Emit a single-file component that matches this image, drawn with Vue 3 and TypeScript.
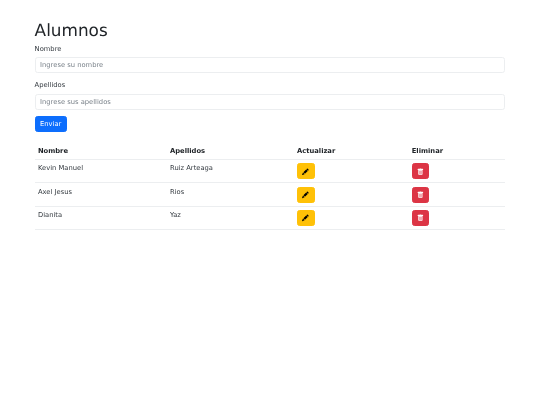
<script setup lang="ts">
interface Alumno { nombre: string; apellidos: string }
const alumnos: Alumno[] = [
  { nombre: 'Kevin Manuel', apellidos: 'Ruiz Arteaga' },
  { nombre: 'Axel Jesus', apellidos: 'Rios' },
  { nombre: 'Dianita', apellidos: 'Yaz' },
]
</script>

<template>
  <div class="page">
    <main class="container">
      <h1 class="title">Alumnos</h1>
      <form class="form" @submit.prevent>
        <div class="field">
          <label class="label" for="nombre">Nombre</label>
          <input id="nombre" class="input" type="text" placeholder="Ingrese su nombre" />
        </div>
        <div class="field">
          <label class="label" for="apellidos">Apellidos</label>
          <input id="apellidos" class="input" type="text" placeholder="Ingrese sus apellidos" />
        </div>
        <button class="btn btn-primary" type="submit">Enviar</button>
      </form>
      <table class="table">
        <colgroup>
          <col class="c1" /><col class="c2" /><col class="c3" /><col />
        </colgroup>
        <thead>
          <tr>
            <th>Nombre</th>
            <th>Apellidos</th>
            <th>Actualizar</th>
            <th>Eliminar</th>
          </tr>
        </thead>
        <tbody>
          <tr v-for="a in alumnos" :key="a.nombre">
            <td>{{ a.nombre }}</td>
            <td>{{ a.apellidos }}</td>
            <td>
              <button class="btn btn-warning" type="button" aria-label="Actualizar">
                <svg class="icon" viewBox="0 0 16 16" fill="currentColor">
                  <path d="M12.854.146a.5.5 0 0 0-.707 0L10.5 1.793 14.207 5.5l1.647-1.646a.5.5 0 0 0 0-.708l-3-3zm.646 6.061L9.793 2.5 3.293 9H3.5a.5.5 0 0 1 .5.5v.5h.5a.5.5 0 0 1 .5.5v.5h.5a.5.5 0 0 1 .5.5v.5h.5a.5.5 0 0 1 .5.5v.207l6.5-6.5zm-7.468 7.468A.5.5 0 0 1 6 13.5V13h-.5a.5.5 0 0 1-.5-.5V12h-.5a.5.5 0 0 1-.5-.5V11h-.5a.5.5 0 0 1-.5-.5V10h-.5a.499.499 0 0 1-.175-.032l-.179.178a.5.5 0 0 0-.11.168l-2 5a.5.5 0 0 0 .65.65l5-2a.5.5 0 0 0 .168-.11l.178-.178z" />
                </svg>
              </button>
            </td>
            <td>
              <button class="btn btn-danger" type="button" aria-label="Eliminar">
                <svg class="icon" viewBox="0 0 16 16" fill="currentColor">
                  <path d="M2.5 1a1 1 0 0 0-1 1v1a1 1 0 0 0 1 1H3v9a2 2 0 0 0 2 2h6a2 2 0 0 0 2-2V4h.5a1 1 0 0 0 1-1V2a1 1 0 0 0-1-1H10a1 1 0 0 0-1-1H7a1 1 0 0 0-1 1H2.5zm3 4a.5.5 0 0 1 .5.5v7a.5.5 0 0 1-1 0v-7a.5.5 0 0 1 .5-.5zM8 5a.5.5 0 0 1 .5.5v7a.5.5 0 0 1-1 0v-7A.5.5 0 0 1 8 5zm3 .5v7a.5.5 0 0 1-1 0v-7a.5.5 0 0 1 1 0z" />
                </svg>
              </button>
            </td>
          </tr>
        </tbody>
      </table>
    </main>
  </div>
</template>

<style scoped>
.page {
  zoom: 0.421875;
  width: 1280px;
  min-height: 960px;
  color: #343a40;
  font-family: "DejaVu Sans", sans-serif;
  font-size: 16px;
  line-height: 1.5;
  text-rendering: geometricPrecision;
  will-change: transform;
}
.container {
  box-sizing: border-box;
  width: 1140px;
  margin: 0 auto;
  padding: 48px 12px 0;
}
.title {
  margin: 0 0 8px;
  color: #212529;
  font-size: 40px;
  font-weight: 500;
  line-height: 1.2;
}
.form {
  display: flex;
  flex-direction: column;
  align-items: flex-start;
  margin-bottom: 23px;
}
.field {
  align-self: stretch;
  margin-bottom: 16px;
}
.label {
  display: block;
  margin-bottom: 8px;
}
.input {
  display: block;
  box-sizing: border-box;
  width: 100%;
  height: 38px;
  padding: 6px 10.6px;
  border: 1px solid #eceef0;
  border-radius: 6px;
  background: #fff;
  color: #212529;
  font: inherit;
  outline: none;
}
.input::placeholder {
  color: #7a828a;
  opacity: 1;
}
.btn {
  display: inline-flex;
  align-items: center;
  justify-content: center;
  box-sizing: border-box;
  height: 38px;
  padding: 6px 10.6px;
  border: 1px solid transparent;
  border-radius: 6px;
  font: inherit;
}
.btn-primary {
  background: #0d6efd;
  border-color: #0d6efd;
  color: #fff;
}
.btn-warning {
  width: 42px;
  background: #ffc107;
  border-color: #ffc107;
  color: #000;
}
.btn-danger {
  width: 42px;
  background: #dc3545;
  border-color: #dc3545;
  color: #fff;
}
.icon {
  display: block;
  width: 18px;
  height: 18px;
}
.table {
  width: 100%;
  border-collapse: collapse;
  table-layout: fixed;
}
.c1 { width: 313px; }
.c2 { width: 301px; }
.c3 { width: 272px; }
th, td {
  padding: 8px 8px 6.8px;
  border-bottom: 1px solid #eceef0;
  text-align: left;
  vertical-align: top;
}
th {
  padding-bottom: 8px;
  color: #212529;
  font-weight: 700;
}
</style>
